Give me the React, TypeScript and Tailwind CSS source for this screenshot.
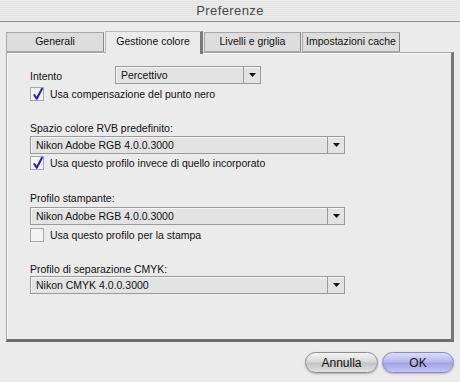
import React from "react";

const font = "font-['Liberation_Sans',Arial,sans-serif]";

function Arrow() {
  return (
    <svg width="7" height="4" viewBox="0 0 7 4">
      <path d="M0 0h7L3.5 4z" fill="#111" />
    </svg>
  );
}

function Select({ value, className }: { value: string; className: string }) {
  return (
    <div
      className={`flex h-[18px] border border-[#9a9a9a] bg-[#e3e3e3] shadow-[inset_1px_1px_0_#f6f6f6] ${className}`}
    >
      <div className="flex flex-1 items-center pl-[5px] text-[10.5px] leading-none text-[#111]">
        {value}
      </div>
      <div className="flex w-[17px] items-center justify-center border-l border-[#9a9a9a]">
        <Arrow />
      </div>
    </div>
  );
}

function Check({ checked, label }: { checked: boolean; label: string }) {
  return (
    <div className="flex items-center gap-[6px]">
      <div className="relative h-[14px] w-[14px] border border-[#a8a8a8] bg-[#f4f4f4]">
        {checked && (
          <svg
            className="absolute left-[1px] top-[-1px]"
            width="12"
            height="14"
            viewBox="0 0 12 14"
          >
            <path
              d="M2.3 8 L4.7 11.8 L10 1.8"
              fill="none"
              stroke="#1c1cc8"
              strokeWidth="2"
              strokeLinecap="round"
              strokeLinejoin="round"
            />
          </svg>
        )}
      </div>
      <span className="text-[10.5px] leading-none text-[#111]">{label}</span>
    </div>
  );
}

const tabs = ["Generali", "Gestione colore", "Livelli e griglia", "Impostazioni cache"];

export default function App() {
  return (
    <div className={`relative h-[382px] w-[460px] overflow-hidden bg-[#ebebeb] ${font}`}>
      {/* title bar */}
      <div className="flex h-[22px] items-center justify-center border-b border-[#8c8c8c] bg-[repeating-linear-gradient(to_bottom,#ececec_0px,#ececec_1px,#e2e2e2_1px,#e2e2e2_2px)] text-[13px] tracking-[0.4px] text-[#4a4a4a]">
        Preferenze
      </div>

      {/* tabs */}
      <div className="ml-[6px] mt-[10px] flex h-[20px] gap-[1px]">
        {tabs.map((t, i) =>
          i === 1 ? (
            <div
              key={t}
              className="relative z-10 -mt-[1px] flex h-[23px] w-[98px] items-center justify-center border-l border-t border-[#bdbdbd] border-r-[3px] border-r-[#7a7a7a] bg-[#ebebeb] pb-[2px] text-[10.5px] text-[#111]"
            >
              {t}
            </div>
          ) : (
            <div
              key={t}
              className={`flex h-[20px] items-center justify-center border border-[#a6a6a6] border-r-[#8a8a8a] bg-[#dddddd] text-[10.5px] text-[#111] ${
                i === 2 ? "w-[97px]" : "w-[98px]"
              }`}
            >
              {t}
            </div>
          )
        )}
      </div>

      {/* panel */}
      <div className="ml-[6px] h-[290px] w-[448px] border-l border-t border-[#a8a8a8] border-r-[3px] border-b-[3px] border-r-[#767676] border-b-[#6e6e6e] bg-[#ebebeb] shadow-[inset_1px_1px_0_#fafafa] pl-[23px]">
        <div className="mt-[13px] flex items-center">
          <span className="mt-[3px] w-[85px] text-[10.5px] text-[#111]">Intento</span>
          <Select value="Percettivo" className="w-[146px]" />
        </div>
        <div className="mt-[2px]">
          <Check checked label="Usa compensazione del punto nero" />
        </div>

        <div className="mt-[22px] text-[10.5px] leading-none text-[#111]">
          Spazio colore RVB predefinito:
        </div>
        <Select value="Nikon Adobe RGB 4.0.0.3000" className="mt-[3px] w-[315px]" />
        <div className="mt-[2px]">
          <Check checked label="Usa questo profilo invece di quello incorporato" />
        </div>

        <div className="mt-[23px] text-[10.5px] leading-none text-[#111]">Profilo stampante:</div>
        <Select value="Nikon Adobe RGB 4.0.0.3000" className="mt-[3px] w-[315px]" />
        <div className="mt-[3px]">
          <Check checked={false} label="Usa questo profilo per la stampa" />
        </div>

        <div className="mt-[22px] text-[10.5px] leading-none text-[#111]">
          Profilo di separazione CMYK:
        </div>
        <Select value="Nikon CMYK 4.0.0.3000" className="mt-[2px] w-[315px]" />
      </div>

      {/* buttons */}
      <div className="mr-[6px] mt-[10px] flex justify-end gap-[4px]">
        <button className="flex h-[21px] w-[73px] items-center justify-center rounded-full border border-[#8e8e8e] bg-[linear-gradient(to_bottom,#f4f4f4_0%,#d8d8d8_45%,#c4c4c4_55%,#e2e2e2_100%)] text-[12px] text-[#111] shadow-[0_1px_2px_rgba(0,0,0,0.25)]">
          Annulla
        </button>
        <button className="flex h-[21px] w-[72px] items-center justify-center rounded-full border border-[#8a8ac8] bg-[linear-gradient(to_bottom,#dcdcfa_0%,#b8b8f0_45%,#a2a2e6_55%,#c4c4f4_100%)] text-[12px] text-[#111] shadow-[0_1px_2px_rgba(0,0,0,0.25)]">
          OK
        </button>
      </div>
    </div>
  );
}
